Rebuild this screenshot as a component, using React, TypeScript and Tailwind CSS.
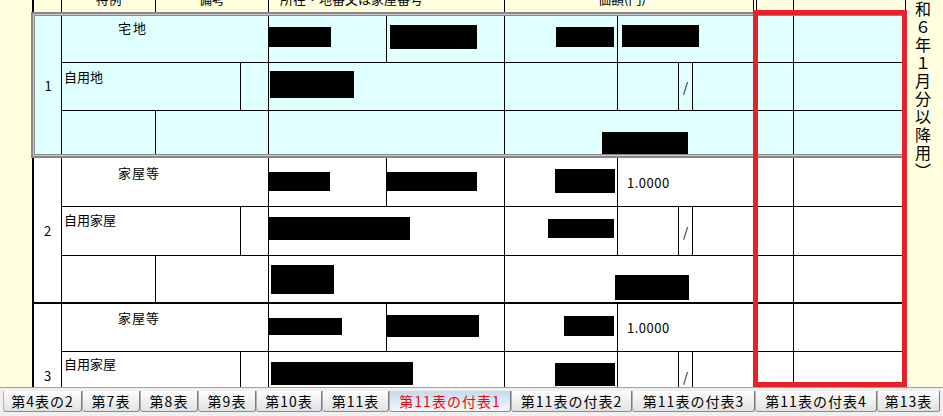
import type { ReactNode } from "react";

function Blk({ className }: { className: string }) {
  return <div className={`shrink-0 bg-black ${className}`} />;
}

function Num({ children }: { children: ReactNode }) {
  return <div className="row-span-3 flex items-center justify-center">{children}</div>;
}

const tabs: [string, string][] = [
  ["第4表の2", "w-[79px]"],
  ["第7表", "w-[58px]"],
  ["第8表", "w-[58px]"],
  ["第9表", "w-[58px]"],
  ["第10表", "w-[66px]"],
  ["第11表", "w-[67px]"],
  ["第11表の付表1", "w-[122px]"],
  ["第11表の付表2", "w-[121px]"],
  ["第11表の付表3", "w-[123px]"],
  ["第11表の付表4", "w-[122px]"],
  ["第13表", "w-[63px]"],
];

function Header() {
  return (
    <div className="ml-px grid h-[12px] w-[874px] grid-cols-[27px_93px_112px_235px_248px_2px_36px_111px] grid-rows-[12px] gap-px border-r border-l-2 border-black bg-black *:overflow-hidden *:bg-[#ffffe0]">
      <div />
      <div><div className="-mt-[10px] text-center">特例</div></div>
      <div><div className="-mt-[10px] text-center">備考</div></div>
      <div><div className="-mt-[10px] whitespace-nowrap pl-[11px]">所在・地番又は家屋番号</div></div>
      <div><div className="-mt-[10px] whitespace-nowrap pl-[93px]">価額(円)</div></div>
      <div />
      <div />
      <div />
    </div>
  );
}

function Row1() {
  return (
    <div className="w-[876px] border-2 border-[#888888]">
      <div className="border border-[#cccccc]">
        <div className="grid grid-cols-[26px_93px_84px_27px_117px_117px_112px_60px_13px_60px_39px_109px] grid-rows-[46px_47px_43px] gap-px border border-[#888888] bg-black *:bg-[#e0ffff]">
          <Num>1</Num>
          <div className="col-span-3 pl-[56px] pt-[3px] tracking-[2px]">宅地</div>
          <div className="flex"><Blk className="mt-[11px] h-[20px] w-[62px]" /></div>
          <div className="flex"><Blk className="ml-[3px] mt-[9px] h-[24px] w-[87px]" /></div>
          <div className="flex justify-end pr-[3px]"><Blk className="mt-[11px] h-[20px] w-[58px]" /></div>
          <div className="col-span-3 flex"><Blk className="ml-[4px] mt-[9px] h-[22px] w-[77px]" /></div>
          <div />
          <div />

          <div className="col-span-2 pl-[2px] pt-[5px]">自用地</div>
          <div />
          <div className="col-span-2 flex"><Blk className="ml-px mt-[8px] h-[27px] w-[84px]" /></div>
          <div />
          <div />
          <div className="flex items-center justify-center">/</div>
          <div />
          <div />
          <div />

          <div />
          <div className="col-span-2" />
          <div className="col-span-2" />
          <div className="col-span-4 flex justify-end pr-[65px]"><Blk className="mt-[21px] h-[22px] w-[86px]" /></div>
          <div />
          <div />
        </div>
      </div>
    </div>
  );
}

function Row2() {
  return (
    <div className="ml-px grid w-[874px] grid-cols-[27px_93px_84px_27px_117px_117px_112px_60px_13px_60px_39px_111px] grid-rows-[48px_48px_46px] gap-px border-r border-b-2 border-l-2 border-black bg-black *:bg-white">
      <Num>2</Num>
      <div className="col-span-3 pl-[56px] pt-[6px] tracking-[1px]">家屋等</div>
      <div className="flex"><Blk className="mt-[14px] h-[19px] w-[61px]" /></div>
      <div className="flex"><Blk className="mt-[14px] h-[19px] w-[90px]" /></div>
      <div className="flex justify-end pr-[2px]"><Blk className="mt-[11px] h-[24px] w-[60px]" /></div>
      <div className="col-span-3 flex items-center pl-[9px] tracking-[0.5px]">1.0000</div>
      <div />
      <div />

      <div className="col-span-2 pl-[2px] pt-[4px]">自用家屋</div>
      <div />
      <div className="col-span-2 flex"><Blk className="mt-[10px] h-[23px] w-[141px]" /></div>
      <div className="flex justify-end pr-[3px]"><Blk className="mt-[12px] h-[19px] w-[66px]" /></div>
      <div />
      <div className="flex items-center justify-center">/</div>
      <div />
      <div />
      <div />

      <div />
      <div className="col-span-2" />
      <div className="col-span-2 flex"><Blk className="ml-[2px] mt-[9px] h-[29px] w-[63px]" /></div>
      <div className="col-span-4 flex justify-end pr-[64px]"><Blk className="mt-[19px] h-[25px] w-[74px]" /></div>
      <div />
      <div />
    </div>
  );
}

function Row3() {
  return (
    <div className="ml-px grid w-[874px] grid-cols-[27px_93px_84px_27px_117px_117px_112px_60px_13px_60px_39px_111px] grid-rows-[47px_48px_46px] gap-px border-r border-l-2 border-black bg-black *:bg-white">
      <Num>3</Num>
      <div className="col-span-3 pl-[56px] pt-[5px] tracking-[1px]">家屋等</div>
      <div className="flex"><Blk className="mt-[14px] h-[17px] w-[73px]" /></div>
      <div className="flex"><Blk className="mt-[11px] h-[22px] w-[92px]" /></div>
      <div className="flex justify-end pr-[3px]"><Blk className="mt-[12px] h-[20px] w-[50px]" /></div>
      <div className="col-span-3 flex items-center pl-[9px] tracking-[0.5px]">1.0000</div>
      <div />
      <div />

      <div className="col-span-2 pl-[2px] pt-[3px]">自用家屋</div>
      <div />
      <div className="col-span-2 flex"><Blk className="ml-[2px] mt-[10px] h-[23px] w-[142px]" /></div>
      <div className="flex justify-end pr-[2px]"><Blk className="mt-[11px] h-[23px] w-[60px]" /></div>
      <div />
      <div className="flex items-center justify-center">/</div>
      <div />
      <div />
      <div />

      <div />
      <div className="col-span-2" />
      <div className="col-span-2" />
      <div className="col-span-4" />
      <div />
      <div />
    </div>
  );
}

export default function App() {
  return (
    <div className="relative flex h-[416px] w-[943px] flex-col overflow-hidden bg-[#ffffe0] font-['Noto_Sans_CJK_JP','Noto_Sans_CJK_SC',sans-serif] text-[13px] leading-[17px] text-black">
      <div className="flex h-[387px] shrink-0 overflow-hidden">
        <div className="w-[31px] shrink-0" />
        <div className="w-[876px] shrink-0">
          <Header />
          <Row1 />
          <Row2 />
          <Row3 />
        </div>
        <div className="flex-1 overflow-hidden">
          <div className="-mt-[37px] flex flex-col items-center pr-[4px] text-[16px] leading-[18px]">
            {"︵令和６年１月分以降用︶".split("").map((c, i) => (
              <span key={i}>{c}</span>
            ))}
          </div>
        </div>
      </div>

      <div className="flex h-[29px] shrink-0 border-t border-[#a0a0a0] bg-[#f0f0f0] pl-[3px] pt-[3px]">
        {tabs.map(([label, w], i) => (
          <div
            key={label}
            className={`flex h-[21px] items-center justify-center rounded-b-[3px] border-r border-b border-l border-r-[#7a7a7a] border-b-[#8a8a8a] border-l-[#b0b0b0] bg-linear-to-b text-[14px] leading-[16px] tracking-[1px] ${w} ${
              i === 6 ? "from-[#c2daf0] to-[#f4f8fc] text-[#ff0000]" : "from-[#fdfdfd] to-[#e2e2e2]"
            }`}
          >
            {label}
          </div>
        ))}
      </div>

      <div className="absolute left-[753px] top-[10px] h-[377px] w-[154px] border-[5px] border-[#e8202a]" />
    </div>
  );
}
